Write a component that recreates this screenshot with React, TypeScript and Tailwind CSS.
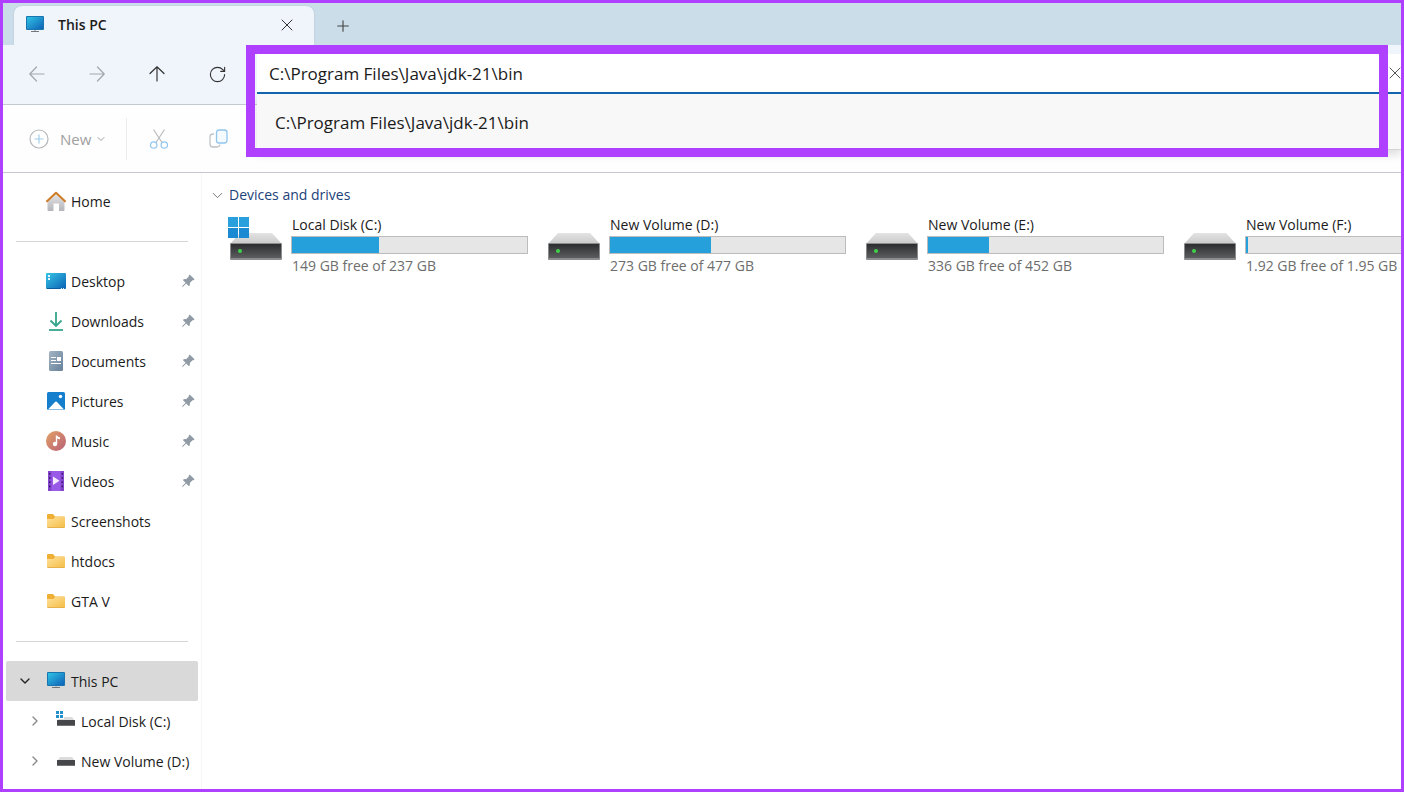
import { ChevronDown, ChevronRight, Plus, RotateCw, X } from 'lucide-react';
import { BsPinAngleFill } from 'react-icons/bs';
import type { ReactNode } from 'react';

interface Drive {
  name: string;
  free: string;
  used: number;
  system?: boolean;
}

const drives: Drive[] = [
  { name: 'Local Disk (C:)', free: '149 GB free of 237 GB', used: 37, system: true },
  { name: 'New Volume (D:)', free: '273 GB free of 477 GB', used: 43 },
  { name: 'New Volume (E:)', free: '336 GB free of 452 GB', used: 26 },
  { name: 'New Volume (F:)', free: '1.92 GB free of 1.95 GB', used: 1 },
];

function MonitorIcon() {
  return (
    <svg width="20" height="20" viewBox="0 0 20 20" aria-hidden="true">
      <defs>
        <linearGradient id="screen" x1="0" y1="0" x2="1" y2="1">
          <stop offset="0" stopColor="#2fc3e4" />
          <stop offset="1" stopColor="#0f62b8" />
        </linearGradient>
      </defs>
      <rect x="1" y="1" width="18" height="14" rx="1" fill="#1875ad" />
      <rect x="2" y="2" width="16" height="12" fill="url(#screen)" />
      <path d="M9 15h2v1H9z" fill="#b9bfc4" />
      <path d="M6 16h8v1H6z" fill="#70777d" />
    </svg>
  );
}

function HomeIcon() {
  return (
    <svg width="20" height="20" viewBox="0 0 20 20" aria-hidden="true">
      <defs>
        <linearGradient id="wall" x1="0" y1="0" x2="0" y2="1">
          <stop offset="0" stopColor="#e6e6e8" />
          <stop offset="1" stopColor="#b4b5ba" />
        </linearGradient>
      </defs>
      <path d="M10 2.500 18.500 10v9a1 1 0 0 1-1 1H13V12.500H7.500V20H2.500a1 1 0 0 1-1-1V10z" fill="url(#wall)" />
      <path d="M1 10.300 10 1.800l9 8.500" fill="none" stroke="#cf7d25" strokeWidth="2" strokeLinecap="round" strokeLinejoin="round" />
    </svg>
  );
}

function DesktopIcon() {
  return (
    <svg width="20" height="20" viewBox="0 0 20 20" aria-hidden="true">
      <defs>
        <linearGradient id="desk" x1="0" y1="0" x2="1" y2="1">
          <stop offset="0" stopColor="#35c5e6" />
          <stop offset="1" stopColor="#0b62b4" />
        </linearGradient>
      </defs>
      <rect x="0" y="2" width="20" height="16" rx="1" fill="url(#desk)" />
      <path d="M2 4h2v2H2zM2 7h2v2H2z" fill="#e6f8fd" />
      <path d="M1 17.500h13" stroke="#0a5ca0" />
      <path d="M15 17.500h1M17 17.500h1" stroke="#d8f0ff" />
    </svg>
  );
}

function DownloadsIcon() {
  return (
    <svg width="20" height="20" viewBox="0 0 20 20" fill="none" stroke="#35a58b" strokeWidth="1.800" aria-hidden="true">
      <path d="M10 1v14M4.500 9.500l5.500 5.500L15.500 9.500" />
      <path d="M3 19h14" />
    </svg>
  );
}

function DocumentsIcon() {
  return (
    <svg width="20" height="20" viewBox="0 0 20 20" aria-hidden="true">
      <defs>
        <linearGradient id="doc" x1="0" y1="0" x2="1" y2="1">
          <stop offset="0" stopColor="#a3b5c3" />
          <stop offset="1" stopColor="#67819a" />
        </linearGradient>
      </defs>
      <rect x="3" y="0" width="14" height="20" rx="1.500" fill="url(#doc)" />
      <path d="M5 6.500h5M5 9.500h5M5 12.500h10" stroke="#fff" />
      <rect x="11" y="6" width="4" height="4" fill="#fff" />
    </svg>
  );
}

function PicturesIcon() {
  return (
    <svg width="20" height="20" viewBox="0 0 20 20" aria-hidden="true">
      <rect x="1" y="1" width="18" height="18" rx="1.500" fill="#167fcd" />
      <path d="M2 18.500 9 11q1-1 2 0l7 7.500z" fill="#fff" />
      <circle cx="14.500" cy="5.500" r="1.700" fill="#fff" />
    </svg>
  );
}

function MusicIcon() {
  return (
    <svg width="20" height="20" viewBox="0 0 20 20" aria-hidden="true">
      <defs>
        <linearGradient id="disc" x1="0" y1="0" x2="1" y2="1">
          <stop offset="0" stopColor="#e3a264" />
          <stop offset="1" stopColor="#b85f78" />
        </linearGradient>
      </defs>
      <circle cx="10" cy="10" r="10" fill="url(#disc)" />
      <circle cx="9" cy="13" r="2.200" fill="#fff" />
      <path d="M9.800 13V4.500h1.400q.3 1.600 2.800 1.800v2q-1.800 0-2.800-.8V13z" fill="#fff" />
    </svg>
  );
}

function VideosIcon() {
  return (
    <svg width="20" height="20" viewBox="0 0 20 20" aria-hidden="true">
      <rect x="2" y="0" width="16" height="20" rx="1" fill="#9a5ae8" />
      <path d="M2 0h3.500v20H2zM14.500 0H18v20h-3.500z" fill="#8546d0" />
      <path d="M3.700 2v17M16.300 2v17" stroke="#32135f" strokeWidth="1.400" strokeDasharray="1.600 2.600" />
      <path d="M7 5.500v8.500l6.500-4.250z" fill="#f5edff" />
    </svg>
  );
}

function FolderIcon() {
  return (
    <svg width="20" height="20" viewBox="0 0 20 20" aria-hidden="true">
      <defs>
        <linearGradient id="folder" x1="0" y1="0" x2="1" y2="1">
          <stop offset="0" stopColor="#ffe09a" />
          <stop offset="1" stopColor="#f4bd45" />
        </linearGradient>
      </defs>
      <path d="M1 4a1 1 0 0 1 1-1h5l2 2.500h9a1 1 0 0 1 1 1V9H1z" fill="#eeb034" />
      <path d="M1 8h6.500L9 6h10v10a1 1 0 0 1-1 1H2a1 1 0 0 1-1-1z" fill="url(#folder)" />
      <path d="M1.500 16.500h17" stroke="#e6b04a" />
    </svg>
  );
}

function SmallDriveIcon({ system }: { system?: boolean }) {
  return (
    <svg width="20" height="20" viewBox="0 0 20 20" aria-hidden="true">
      <path d="M4 6h12l3 4H1z" fill="#dcdcdc" />
      <rect x="1" y="9" width="18" height="6" fill="#45474a" />
      <path d="M1 14.500h18" stroke="#737577" />
      {system && (
        <>
          <path d="M0 0h8v8H0z" fill="#fff" />
          <path d="M0 0h3v3H0zM4 0h3v3H4zM0 4h3v3H0zM4 4h3v3H4z" fill="#258fcb" />
        </>
      )}
    </svg>
  );
}

function DriveIcon({ system }: { system?: boolean }) {
  return (
    <svg width="54" height="45" viewBox="0 0 54 45" className="shrink-0" aria-hidden="true">
      <defs>
        <linearGradient id="lid" x1="0" y1="0" x2="0" y2="1">
          <stop offset="0" stopColor="#e3e3e3" />
          <stop offset="1" stopColor="#c9c9c9" />
        </linearGradient>
        <linearGradient id="case" x1="0" y1="0" x2="0" y2="1">
          <stop offset="0" stopColor="#2c2d2f" />
          <stop offset="1" stopColor="#5c5d5f" />
        </linearGradient>
      </defs>
      <path d="M12 18h32l10 11H2z" fill="url(#lid)" />
      <rect x="2" y="28" width="52" height="17" rx="1" fill="#8b8c8e" />
      <rect x="3" y="29" width="50" height="14" fill="url(#case)" />
      <circle cx="12" cy="36" r="2" fill="#3fd24a" />
      {system && (
        <>
          <path d="M0 2h10v10H0zM11 2h10v10H11z" fill="#2a9fdd" />
          <path d="M0 13h10v10H0zM11 13h10v10H11z" fill="#1b8ad2" />
        </>
      )}
    </svg>
  );
}

function ArrowIcon({ className }: { className: string }) {
  return (
    <svg width="16" height="16" viewBox="0 0 16 16" fill="none" stroke="currentColor" strokeWidth="1.200" strokeLinecap="round" strokeLinejoin="round" className={className} aria-hidden="true">
      <path d="M15 8H1M7.500 1 .8 8l6.700 7" />
    </svg>
  );
}

function NewIcon() {
  return (
    <svg width="20" height="20" viewBox="0 0 20 20" fill="none" aria-hidden="true">
      <circle cx="10" cy="10" r="9" stroke="#b5b8bb" strokeWidth="1.200" />
      <path d="M10 5.500v9M5.500 10h9" stroke="#a3cdec" strokeWidth="1.200" />
    </svg>
  );
}

function CutIcon() {
  return (
    <svg width="20" height="22" viewBox="0 0 20 22" fill="none" strokeWidth="1.200" aria-hidden="true">
      <path d="M4.500 1.500 13 14.500M15.500 1.500 7 14.500" stroke="#b9bcbf" />
      <circle cx="4.700" cy="17" r="3.200" stroke="#90c5ee" />
      <circle cx="15.300" cy="17" r="3.200" stroke="#90c5ee" />
    </svg>
  );
}

function CopyIcon() {
  return (
    <svg width="20" height="20" viewBox="0 0 20 20" fill="none" strokeWidth="1.300" aria-hidden="true">
      <path d="M5 5H4a3 3 0 0 0-3 3v7a3 3 0 0 0 3 3h4a3 3 0 0 0 3-2.500" stroke="#bfc2c5" />
      <rect x="7.500" y="1" width="10.500" height="13" rx="2.500" fill="#f5faff" stroke="#90c5ee" />
    </svg>
  );
}

interface PlaceProps {
  icon: ReactNode;
  label: string;
  pinned?: boolean;
}

function Place({ icon, label, pinned }: PlaceProps) {
  return (
    <li>
      <a href="#" className="flex h-10 items-center gap-[5px] pr-[6px] pl-[43px] hover:bg-gray-100">
        {icon}
        <span className="flex-1 pt-0.5 whitespace-nowrap">{label}</span>
        {pinned && <BsPinAngleFill size={14} className="text-[#8f9aa5]" aria-hidden="true" />}
      </a>
    </li>
  );
}

function Divider() {
  return (
    <li className="flex h-10 items-center px-[13px]" role="separator">
      <span className="h-px flex-1 bg-[#d5d5d7]" />
    </li>
  );
}

function TabStrip() {
  return (
    <div className="flex h-[42px] items-end bg-[#cbdde9]">
      <div className="ml-[11px] flex h-[39px] w-[300px] items-center rounded-t-lg bg-[#f0f5fc] pr-[17px] pb-px pl-[11px] shadow-[0_0_2px_#b3c3cf]">
        <MonitorIcon />
        <span className="ml-[13px] flex-1 text-sm font-semibold">This PC</span>
        <button type="button" aria-label="Close tab">
          <X size={20} strokeWidth={1.2} className="text-[#333]" />
        </button>
      </div>
      <button type="button" aria-label="New tab" className="flex h-[39px] w-[58px] items-center justify-center">
        <Plus size={18} strokeWidth={1.5} className="text-[#444]" />
      </button>
    </div>
  );
}

function AddressBar() {
  return (
    <div className="relative z-10 ml-[10px] h-10 min-w-0 flex-1">
      <div className="flex h-full items-center overflow-hidden border-b-2 border-[#1465b0] bg-white">
        <input
          type="text"
          aria-label="Address"
          defaultValue="C:\Program Files\Java\jdk-21\bin"
          className="h-full min-w-0 flex-1 pt-px pl-3 text-[17px] outline-none"
        />
        <button type="button" aria-label="Clear address" className="-mr-1">
          <X size={20} strokeWidth={1.1} className="text-[#444]" />
        </button>
      </div>
      {/* Suggestions */}
      <ul className="absolute top-full right-0 left-0 border-b border-[#d4d4d4] bg-[#f8f8f8] shadow-[0_5px_8px_rgba(0,0,0,0.12)]">
        <li>
          <button type="button" className="flex h-[55px] w-full items-center pt-[3px] pl-[18px] text-[17px]">
            C:\Program Files\Java\jdk-21\bin
          </button>
        </li>
      </ul>
      {/* Highlight frame around the path */}
      <div className="pointer-events-none absolute -top-[9px] right-[13px] -left-[11px] h-[112px] border-9 border-[#b040ff]" />
    </div>
  );
}

function NavigationBar() {
  return (
    <div className="flex h-[60px] items-center border-b border-[#c3cad1] bg-[#f0f5fc] pb-px pl-1">
      <button type="button" aria-label="Back" className="flex w-[60px] justify-center">
        <ArrowIcon className="text-[#a2a7ad]" />
      </button>
      <button type="button" aria-label="Forward" className="flex w-[60px] justify-center">
        <ArrowIcon className="rotate-180 text-[#a2a7ad]" />
      </button>
      <button type="button" aria-label="Up" className="flex w-[60px] justify-center">
        <ArrowIcon className="rotate-90 text-[#333]" />
      </button>
      <button type="button" aria-label="Refresh" className="flex w-[60px] justify-center">
        <RotateCw size={19} strokeWidth={1.4} className="text-[#333]" />
      </button>
      <AddressBar />
    </div>
  );
}

function CommandBar() {
  return (
    <div className="flex h-[68px] items-center border-b border-[#c5c8cc] bg-[#fefefe] pl-[26px] text-[#a0a0a0]">
      <button type="button" className="flex items-center text-[15px]">
        <NewIcon />
        <span className="ml-[11px] pt-0.5">New</span>
        <ChevronDown size={12} strokeWidth={2} className="ml-1" />
      </button>
      <div className="ml-[19px] h-[42px] w-px bg-[#ececec]" />
      <button type="button" aria-label="Cut" className="ml-[2px] flex w-[60px] justify-center">
        <CutIcon />
      </button>
      <button type="button" aria-label="Copy" className="flex w-[60px] justify-center">
        <CopyIcon />
      </button>
    </div>
  );
}

function Sidebar() {
  return (
    <nav aria-label="Places" className="w-[199px] shrink-0 border-r border-[#f6f6f6] pt-2 text-sm">
      <ul>
        <Place icon={<HomeIcon />} label="Home" />
        <Divider />
        <Place icon={<DesktopIcon />} label="Desktop" pinned />
        <Place icon={<DownloadsIcon />} label="Downloads" pinned />
        <Place icon={<DocumentsIcon />} label="Documents" pinned />
        <Place icon={<PicturesIcon />} label="Pictures" pinned />
        <Place icon={<MusicIcon />} label="Music" pinned />
        <Place icon={<VideosIcon />} label="Videos" pinned />
        <Place icon={<FolderIcon />} label="Screenshots" />
        <Place icon={<FolderIcon />} label="htdocs" />
        <Place icon={<FolderIcon />} label="GTA V" />
        <Divider />
        <li>
          <a href="#" aria-current="page" className="mx-[3px] flex h-10 items-center rounded-xs bg-[#d9d9d9] pl-[11px]">
            <ChevronDown size={16} strokeWidth={2} className="text-[#222]" />
            <span className="ml-[13px]">
              <MonitorIcon />
            </span>
            <span className="ml-[5px] pt-0.5">This PC</span>
          </a>
        </li>
        {drives.slice(0, 2).map((drive) => (
          <li key={drive.name}>
            <a href="#" className="flex h-10 items-center pl-6 whitespace-nowrap">
              <ChevronRight size={16} strokeWidth={2} className="text-[#888]" />
              <span className="ml-[13px]">
                <SmallDriveIcon system={drive.system} />
              </span>
              <span className="ml-[5px] pt-0.5">{drive.name}</span>
            </a>
          </li>
        ))}
      </ul>
    </nav>
  );
}

function DriveTile({ drive }: { drive: Drive }) {
  return (
    <li className="flex gap-[10px]">
      <DriveIcon system={drive.system} />
      <div>
        <p className="leading-5">{drive.name}</p>
        <div className="mt-px -ml-px h-[18px] w-[237px] border border-[#bcbcbc] bg-[#e6e6e6]">
          <div className="h-full bg-[#26a0da]" style={{ width: `${drive.used}%` }} />
        </div>
        <p className="pt-0.5 leading-5 text-[#6d6d6d]">{drive.free}</p>
      </div>
    </li>
  );
}

export default function App() {
  return (
    <div className="flex h-screen flex-col overflow-hidden border-3 border-[#b040ff] bg-white font-['Open_Sans','Noto_Sans',sans-serif] text-[#1b1b1b]">
      <TabStrip />
      <NavigationBar />
      <CommandBar />
      <div className="flex min-h-0 flex-1">
        <Sidebar />
        <main className="min-w-0 flex-1 overflow-hidden pt-3 pl-[7px] text-sm">
          <h2>
            <button type="button" className="flex items-center gap-[3px] leading-5 text-[#1c4278]">
              <ChevronDown size={17} strokeWidth={1.4} className="text-[#777]" />
              Devices and drives
            </button>
          </h2>
          <ul className="mt-[10px] grid grid-cols-[repeat(4,318px)] pl-[19px] whitespace-nowrap">
            {drives.map((drive) => (
              <DriveTile key={drive.name} drive={drive} />
            ))}
          </ul>
        </main>
      </div>
    </div>
  );
}
